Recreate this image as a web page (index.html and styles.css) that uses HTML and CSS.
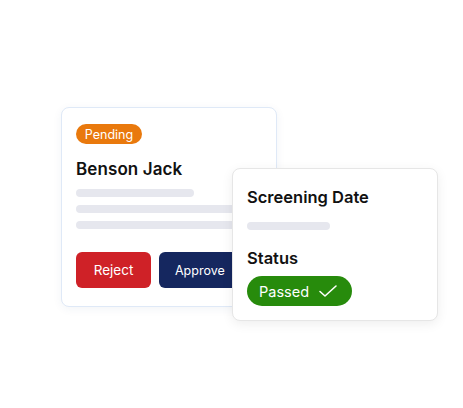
FILE: index.html
```html
<!DOCTYPE html>
<html>
<head>
<meta charset="utf-8">
<link rel="stylesheet" href="styles.css">
</head>
<body>
<div class="stage">
  <div class="card card-applicant">
    <span class="badge badge-pending">Pending</span>
    <h2 class="name">Benson Jack</h2>
    <div class="lines">
      <div class="line line-short"></div>
      <div class="line line-full"></div>
      <div class="line line-full"></div>
    </div>
    <div class="actions">
      <button class="btn btn-reject">Reject</button>
      <button class="btn btn-approve">Approve</button>
    </div>
  </div>
  <div class="card card-screening">
    <h3 class="label">Screening Date</h3>
    <div class="line line-date"></div>
    <h3 class="label label-status">Status</h3>
    <span class="pill-passed">Passed
      <svg width="20" height="14" viewBox="0 0 20 14" fill="none"><path d="M2 7.5 L7 12 L18 2" stroke="#fff" stroke-width="1.6" stroke-linecap="round" stroke-linejoin="round"/></svg>
    </span>
  </div>
</div>
</body>
</html>
```
FILE: styles.css
```css
* { box-sizing: border-box; }
html, body { margin: 0; padding: 0; background: #fff; }
body { font-family: "Inter", "Open Sans", sans-serif; color: #111; }
.stage { position: relative; width: 463px; height: 408px; padding: 107px 0 0 61px; }
.card { background: #fff; border-radius: 8px; }
.card-applicant {
  width: 216px; height: 200px;
  border: 1px solid #dfe9f7;
  box-shadow: 0 2px 10px rgba(30, 60, 120, 0.06);
  padding: 16px 0 0 14px;
  display: flex; flex-direction: column; align-items: flex-start;
  overflow: hidden;
}
.badge-pending {
  display: inline-flex; align-items: center; justify-content: center;
  width: 66px; height: 20px; border-radius: 10px;
  background: #e9790d; color: #fff; font-size: 12.5px; font-weight: 400;
}
.name { margin: 14px 0 0; font-size: 17px; font-weight: 600; line-height: 22px; letter-spacing: 0.1px; }
.lines { display: flex; flex-direction: column; gap: 8px; margin-top: 9px; width: 100%; }
.line { height: 8px; border-radius: 4px; background: #e6e7ee; }
.line-short { width: 118px; }
.line-full { width: 200px; }
.actions { display: flex; gap: 8px; margin-top: 23px; }
.btn {
  height: 36px; border: none; border-radius: 6px; color: #fff;
  font-family: inherit; font-size: 13.5px; padding: 0;
}
.btn-reject { width: 75px; background: #cf2127; }
.btn-approve { width: 84px; background: #15275f; font-size: 12.5px; text-align: left; padding-left: 16px; }
.card-screening {
  position: absolute; left: 232px; top: 168px;
  width: 206px; height: 153px;
  border: 1px solid #e6e6e6;
  box-shadow: 0 3px 12px rgba(0, 0, 0, 0.07);
  padding: 17px 0 0 14px;
  display: flex; flex-direction: column; align-items: flex-start;
}
.label { margin: 0; font-size: 16.5px; font-weight: 600; line-height: 22px; }
.line-date { width: 83px; margin-top: 14px; }
.label-status { margin-top: 17px; }
.pill-passed {
  margin-top: 7px;
  display: inline-flex; align-items: center; gap: 9px;
  width: 105px; height: 30px; border-radius: 15px;
  background: #278b0c; color: #fff; font-size: 14.5px;
  padding-left: 12px;
}
```
